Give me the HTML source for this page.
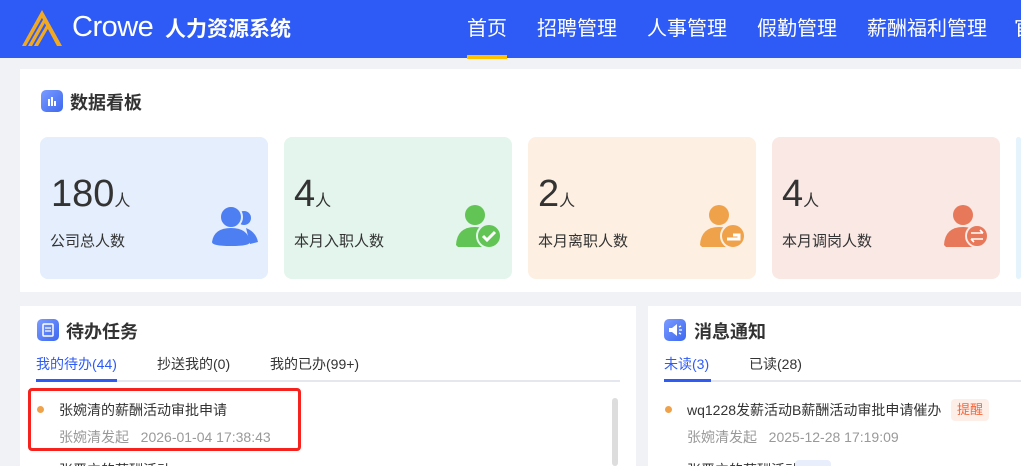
<!DOCTYPE html>
<html style="overflow:hidden;width:1021px;height:466px"><head><meta charset="utf-8"><style>
*{margin:0;padding:0;box-sizing:border-box}
body{width:1021px;height:466px;overflow:hidden;background:#f0f2f5;font-family:"Liberation Sans","Noto Sans CJK SC",sans-serif;position:relative;color:#333}
.abs{position:absolute}
.hdr{left:0;top:0;width:1021px;height:58px;background:#2e5bf6}
.nav{top:12px;color:#fff;font-size:20px;white-space:nowrap}
.panel{background:#fff}
.card{top:137px;width:228px;height:142px;border-radius:8px}
.num{font-size:38px;color:#333;line-height:1}
.num small{font-size:16px}
.lbl{font-size:15px;color:#333}
.ttl{font-size:18px;font-weight:bold;color:#333}
.ico{width:22px;height:22px;border-radius:5px;background:linear-gradient(135deg,#7a9bff,#3d68f0)}
.tab{font-size:14px;color:#333;top:354px}
.t1{font-size:14px;color:#333}
.t2{font-size:14px;color:#999}
.clip{overflow:hidden;height:6px;line-height:20px}
</style></head><body>
<div class="abs hdr"></div>
<svg class="abs" style="left:20px;top:8px" width="44" height="38" viewBox="0 0 44 38"><path d="M22 2 L42 38 L37 38 L22 10 Z" fill="#f2a922"/><path d="M22 2 L2 38 L6 38 L23 8Z M24 10 L8 38 L12 38 L26 13Z M27 16 L14 38 L18 38 L29 19Z" fill="#f2a922"/></svg>
<div class="abs" style="left:72px;top:11px;color:#fff;font-size:29px;letter-spacing:-0.5px">Crowe</div>
<div class="abs" style="left:165px;top:13px;color:#fff;font-size:21px;font-weight:bold">人力资源系统</div>
<div class="abs nav" style="left:467px">首页</div>
<div class="abs" style="left:467px;top:55px;width:40px;height:4px;background:#ffc000"></div>
<div class="abs nav" style="left:537px">招聘管理</div>
<div class="abs nav" style="left:647px">人事管理</div>
<div class="abs nav" style="left:757px">假勤管理</div>
<div class="abs nav" style="left:867px">薪酬福利管理</div>
<div class="abs nav" style="left:1014px">官</div>

<div class="abs panel" style="left:20px;top:69px;width:1001px;height:223px"></div>
<div class="abs ico" style="left:41px;top:90px"></div>
<svg class="abs" style="left:41px;top:90px" width="22" height="22"><rect x="7" y="9" width="2" height="7" fill="#fff"/><rect x="10" y="7" width="2" height="9" fill="#fff"/><rect x="13" y="11" width="2" height="5" fill="#fff"/></svg>
<div class="abs ttl" style="left:70px;top:89px">数据看板</div>

<div class="abs card" style="left:40px;background:#e4eefc"></div>
<div class="abs card" style="left:284px;background:#e3f5ec"></div>
<div class="abs card" style="left:528px;background:#fdf0e2"></div>
<div class="abs card" style="left:772px;background:#f9e8e4"></div>
<div class="abs card" style="left:1016px;width:5px;background:#e4f3fc"></div>

<div class="abs num" style="left:51px;top:175px">180<small>人</small></div>
<div class="abs lbl" style="left:50px;top:230px">公司总人数</div>
<div class="abs num" style="left:294px;top:175px">4<small>人</small></div>
<div class="abs lbl" style="left:294px;top:230px">本月入职人数</div>
<div class="abs num" style="left:538px;top:175px">2<small>人</small></div>
<div class="abs lbl" style="left:538px;top:230px">本月离职人数</div>
<div class="abs num" style="left:782px;top:175px">4<small>人</small></div>
<div class="abs lbl" style="left:782px;top:230px">本月调岗人数</div>

<svg class="abs" style="left:210px;top:204px" width="50" height="42"><circle cx="34" cy="14" r="7" fill="#4d7ff3"/><path d="M36 24 Q46 28 48 38 L40 40 Z" fill="#4d7ff3"/><circle cx="21" cy="13" r="11" fill="#4d7ff3" stroke="#e4eefc" stroke-width="2"/><path d="M2 38 Q4 24 21 24 Q38 24 40 38 Q40 42 21 42 Q2 42 2 38Z" fill="#4d7ff3"/></svg>
<svg class="abs" style="left:455px;top:203px" width="48" height="46"><circle cx="20" cy="12" r="10" fill="#61c454"/><path d="M1 42 Q2 24 20 24 Q30 24 34 30 L34 44 L3 44Z" fill="#61c454"/><circle cx="34" cy="33" r="12" fill="#61c454" stroke="#e3f5ec" stroke-width="2"/><path d="M28 33 L32 37 L40 29" stroke="#fff" stroke-width="3" fill="none"/></svg>
<svg class="abs" style="left:699px;top:203px" width="48" height="46"><circle cx="20" cy="12" r="10" fill="#f0a24a"/><path d="M1 42 Q2 24 20 24 Q30 24 34 30 L34 44 L3 44Z" fill="#f0a24a"/><circle cx="34" cy="33" r="12" fill="#f0a24a" stroke="#fdf0e2" stroke-width="2"/><path d="M28 36 L40 36 L40 32 L34 32" stroke="#fff" stroke-width="3" fill="none"/></svg>
<svg class="abs" style="left:943px;top:203px" width="48" height="46"><circle cx="20" cy="12" r="10" fill="#e8785a"/><path d="M1 42 Q2 24 20 24 Q30 24 34 30 L34 44 L3 44Z" fill="#e8785a"/><circle cx="34" cy="33" r="11" fill="#e8785a" stroke="#f9e8e4" stroke-width="2"/><path d="M28 30 L40 30 M37 27 L40 30 M28 36 L40 36 M31 39 L28 36" stroke="#fff" stroke-width="1.6" fill="none"/></svg>

<div class="abs panel" style="left:20px;top:306px;width:616px;height:160px"></div>
<div class="abs panel" style="left:648px;top:306px;width:373px;height:160px"></div>

<div class="abs ico" style="left:37px;top:319px"></div>
<svg class="abs" style="left:37px;top:319px" width="22" height="22"><rect x="6" y="5" width="10" height="12" rx="1" fill="none" stroke="#fff" stroke-width="1.5"/><path d="M8 9h6M8 12h6" stroke="#fff" stroke-width="1.3"/></svg>
<div class="abs ttl" style="left:66px;top:318px">待办任务</div>
<div class="abs tab" style="left:36px;color:#2e5bf6">我的待办(44)</div>
<div class="abs tab" style="left:157px">抄送我的(0)</div>
<div class="abs tab" style="left:270px">我的已办(99+)</div>
<div class="abs" style="left:36px;top:380px;width:584px;height:2px;background:#e4e7ed"></div>
<div class="abs" style="left:36px;top:379px;width:81px;height:3px;background:#2e5bf6"></div>
<div class="abs" style="left:612px;top:398px;width:6px;height:68px;background:#ddd;border-radius:3px"></div>
<div class="abs" style="left:37px;top:406px;width:7px;height:7px;border-radius:50%;background:#f0a24a"></div>
<div class="abs t1" style="left:59px;top:400px">张婉清的薪酬活动审批申请</div>
<div class="abs t2" style="left:59px;top:427px">张婉清发起&nbsp;&nbsp;&nbsp;2026-01-04 17:38:43</div>
<div class="abs t1 clip" style="left:59px;top:460px">张晋立的薪酬活动</div>
<div class="abs" style="left:28px;top:388px;width:273px;height:63px;border:3px solid #f5221d;border-radius:4px"></div>

<div class="abs ico" style="left:664px;top:319px"></div>
<svg class="abs" style="left:664px;top:319px" width="22" height="22"><path d="M5 9h3l5-4v12l-5-4H5Z" fill="#fff"/><path d="M15 8l2-1M15 11h3M15 14l2 1" stroke="#fff" stroke-width="1.3"/></svg>
<div class="abs ttl" style="left:694px;top:318px">消息通知</div>
<div class="abs tab" style="left:664px;color:#2e5bf6">未读(3)</div>
<div class="abs tab" style="left:749px">已读(28)</div>
<div class="abs" style="left:664px;top:380px;width:357px;height:2px;background:#e4e7ed"></div>
<div class="abs" style="left:664px;top:379px;width:47px;height:3px;background:#2e5bf6"></div>
<div class="abs" style="left:665px;top:406px;width:7px;height:7px;border-radius:50%;background:#f0a24a"></div>
<div class="abs t1" style="left:687px;top:400px">wq1228发薪活动B薪酬活动审批申请催办</div>
<div class="abs" style="left:951px;top:399px;width:38px;height:22px;background:#fdeee8;border-radius:4px;color:#f5673c;font-size:13px;text-align:center;line-height:22px">提醒</div>
<div class="abs t2" style="left:687px;top:427px">张婉清发起&nbsp;&nbsp;&nbsp;2025-12-28 17:19:09</div>
<div class="abs t1 clip" style="left:687px;top:460px">张晋立的薪酬活动</div>
<div class="abs" style="left:795px;top:460px;width:36px;height:6px;background:#e8eefc;border-radius:4px 4px 0 0"></div>
</body></html>
